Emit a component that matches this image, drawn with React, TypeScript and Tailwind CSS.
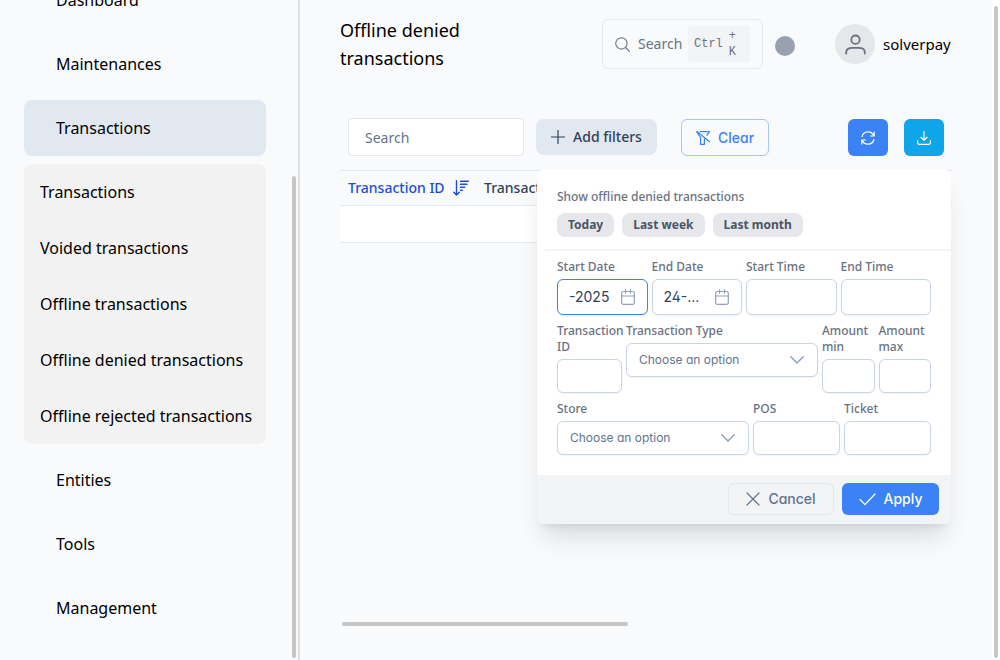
import type { ReactNode, SVGProps } from "react";

const ui = "font-['Noto_Sans',sans-serif]";
const inter = "font-['Inter',sans-serif] [font-feature-settings:'cv02','cv03','cv04','cv11']";
const field = "min-w-0 w-full rounded-md border border-slate-300 bg-white shadow-xs outline-none";

function Icon({ children, ...rest }: SVGProps<SVGSVGElement> & { children: ReactNode }) {
  return (
    <svg
      width="14"
      height="14"
      viewBox="0 0 14 14"
      fill="none"
      stroke="currentColor"
      strokeWidth="1.200"
      strokeLinecap="round"
      strokeLinejoin="round"
      aria-hidden="true"
      {...rest}
    >
      {children}
    </svg>
  );
}

function NavItem({ label, active = false }: { label: string; active?: boolean }) {
  return (
    <a
      href="#"
      className={`flex h-14 items-center rounded-lg px-8 ${active ? "bg-slate-200" : ""}`}
    >
      {label}
    </a>
  );
}

function Sidebar() {
  const children = [
    "Transactions",
    "Voided transactions",
    "Offline transactions",
    "Offline denied transactions",
    "Offline rejected transactions",
  ];
  return (
    <aside className="relative h-full w-[300px] shrink-0 overflow-hidden border-r-2 border-[#dedede]">
      <nav className="-mt-7 flex flex-col gap-2 pl-6 pr-8 text-base">
        <NavItem label="Dashboard" />
        <NavItem label="Maintenances" />
        <NavItem label="Transactions" active />
        <div className="rounded-lg bg-[#f2f2f2]">
          {children.map((label) => (
            <a key={label} href="#" className="flex h-14 items-center whitespace-nowrap px-4">
              {label}
            </a>
          ))}
        </div>
        <NavItem label="Entities" />
        <NavItem label="Tools" />
        <NavItem label="Management" />
      </nav>
      <div className="absolute bottom-0.5 right-0.5 top-44 w-1 rounded-full bg-[#c6c6c6]" />
    </aside>
  );
}

function Header() {
  return (
    <header className="flex items-center">
      <h1 className="w-40 text-lg leading-7">Offline denied transactions</h1>
      <button
        type="button"
        className="ml-auto flex h-[50px] w-[161px] items-center rounded-md border border-gray-200 pl-3 text-gray-500"
      >
        <Icon width="15" height="15" strokeWidth="1">
          <circle cx="6" cy="6" r="5.300" />
          <path d="M9.8 9.8 13.4 13.4" />
        </Icon>
        <span className="ml-2 w-[50px] text-left text-sm">Search</span>
        <kbd className="flex h-9 w-[62px] items-center gap-1.5 rounded bg-gray-100 pl-1.5 font-['Liberation_Mono',monospace] text-xs leading-4">
          <span>Ctrl</span>
          <span>
            +<br />K
          </span>
        </kbd>
      </button>
      <span className="ml-3 mt-1 size-5 rounded-full bg-gray-400" />
      <div className="ml-10 flex items-center gap-2">
        <span className="flex size-10 items-center justify-center rounded-full bg-gray-200 text-gray-500">
          <Icon width="21" height="21">
            <circle cx="7" cy="3.800" r="2.800" />
            <path d="M.8 13v-.8C.8 10 2.500 9.200 5 9.200h4c2.500 0 4.200.8 4.200 3v.8" />
          </Icon>
        </span>
        <span className="w-[69px] whitespace-nowrap text-[15px]">solverpay</span>
      </div>
    </header>
  );
}

function CalendarIcon() {
  return (
    <Icon width="14" height="16" viewBox="0 0 14 16" className="shrink-0 text-slate-400">
      <rect x=".7" y="2.500" width="12.600" height="12.800" rx="1.500" />
      <path d="M.7 7h12.600M4.500 .8v3.400M9.500 .8v3.400" />
    </Icon>
  );
}

function TextField({ id, label, className = "" }: { id: string; label: string; className?: string }) {
  return (
    <div className="flex min-w-0 flex-col gap-1">
      <label htmlFor={id}>{label}</label>
      <input id={id} type="text" className={`${field} ${className}`} />
    </div>
  );
}

function DateField({
  id,
  label,
  value,
  active = false,
}: {
  id: string;
  label: string;
  value: string;
  active?: boolean;
}) {
  return (
    <div className="flex min-w-0 flex-col gap-1">
      <label htmlFor={id}>{label}</label>
      <div
        className={`flex h-9 items-center rounded-md border bg-white pl-[11px] pr-3 shadow-xs ${
          active ? "border-[#3b82f6]" : "border-slate-300"
        }`}
      >
        <input
          id={id}
          type="text"
          defaultValue={value}
          className={`${inter} w-full min-w-0 text-sm font-normal text-slate-700 outline-none`}
        />
        <CalendarIcon />
      </div>
    </div>
  );
}

function SelectField({ id, label }: { id: string; label: string }) {
  return (
    <div className="flex min-w-0 flex-col gap-1">
      <label htmlFor={id}>{label}</label>
      <div className="grid items-center">
        <select
          id={id}
          className={`${inter} ${field} col-start-1 row-start-1 h-[34px] appearance-none px-3 text-xs font-normal text-slate-500`}
        >
          <option>Choose an option</option>
        </select>
        <Icon
          strokeWidth="1.500"
          className="pointer-events-none col-start-1 row-start-1 mr-3.5 justify-self-end text-slate-400"
        >
          <path d="M.8 3.800 7 10l6.200-6.200" />
        </Icon>
      </div>
    </div>
  );
}

function FilterPanel() {
  return (
    <div className="absolute left-px top-[50px] z-10 w-[414px] overflow-hidden rounded-lg bg-white text-xs font-medium leading-4 text-gray-500 shadow-xl">
      <section className="px-5 pt-5">
        <p>Show offline denied transactions</p>
        <div className="mt-2 flex gap-2">
          {["Today", "Last week", "Last month"].map((label) => (
            <button
              key={label}
              type="button"
              className="h-6 rounded-lg bg-gray-200 px-[11px] font-bold text-gray-600"
            >
              {label}
            </button>
          ))}
        </div>
      </section>
      <div className="ml-2 mt-3 h-0.5 bg-gray-100" />
      <form className="flex flex-col gap-2 px-5 pb-5 pt-2">
        <div className="grid grid-cols-4 gap-1">
          <DateField id="start-date" label="Start Date" value="-2025" active />
          <DateField id="end-date" label="End Date" value="24-..." />
          <TextField id="start-time" label="Start Time" className="h-9" />
          <TextField id="end-time" label="End Time" className="h-9" />
        </div>
        <div className="grid grid-cols-[65px_192px_1fr_1fr] items-start gap-1">
          <TextField id="transaction-id" label="Transaction ID" className="h-[34px]" />
          <SelectField id="transaction-type" label="Transaction Type" />
          <TextField id="amount-min" label="Amount min" className="h-[34px]" />
          <TextField id="amount-max" label="Amount max" className="h-[34px]" />
        </div>
        <div className="grid grid-cols-[192px_1fr_1fr] gap-1">
          <SelectField id="store" label="Store" />
          <TextField id="pos" label="POS" className="h-[34px]" />
          <TextField id="ticket" label="Ticket" className="h-[34px]" />
        </div>
      </form>
      <footer className={`${inter} flex justify-end gap-2 bg-gray-100 px-3 pb-[9px] pt-2 text-sm`}>
        <button
          type="button"
          className="flex h-8 w-[106px] items-center justify-center gap-2 rounded-md border border-slate-200 text-slate-500"
        >
          <Icon>
            <path d="m1 1 12 12M13 1 1 13" />
          </Icon>
          Cancel
        </button>
        <button
          type="button"
          className="flex h-8 w-[97px] items-center justify-center gap-2 rounded-md bg-[#3b82f6] text-white"
        >
          <Icon width="17" height="14" viewBox="0 0 17 14">
            <path d="m1 7.500 5 5L16 2" />
          </Icon>
          Apply
        </button>
      </footer>
    </div>
  );
}

function Toolbar() {
  return (
    <div className="flex items-end px-2">
      <input
        type="search"
        aria-label="Search transactions"
        placeholder="Search"
        className="h-[38px] w-44 rounded border border-gray-200 bg-white px-4 text-sm outline-none placeholder:text-slate-500"
      />
      <div className="relative ml-3 self-center">
        <button
          type="button"
          className="flex h-9 w-[121px] items-center justify-center gap-2 rounded-lg bg-slate-200 text-sm font-medium text-slate-700"
        >
          <Icon>
            <path d="M7 .5v13M.5 7h13" />
          </Icon>
          Add filters
        </button>
        <FilterPanel />
      </div>
      <button
        type="button"
        className={`${inter} ml-6 flex h-[37px] w-[88px] items-center justify-center gap-2 rounded-md border border-[#a3c5fb] text-sm font-medium text-[#3b82f6]`}
      >
        <Icon>
          <path d="M4.300 .7h9.100L11 4.300M.6 .7l4 5.600v7h3.800V7.800M1.300 .7l12 9.800" />
        </Icon>
        Clear
      </button>
      <button
        type="button"
        aria-label="Refresh"
        className="ml-auto flex h-[37px] w-10 items-center justify-center rounded-md bg-[#3b82f6] text-white"
      >
        <Icon>
          <path d="M1 5.500a6.200 6.200 0 0 1 11.800-.7M13.200 1v4H9.500M13 8.500a6.200 6.200 0 0 1-11.800.7M.8 13V9h3.700" />
        </Icon>
      </button>
      <button
        type="button"
        aria-label="Download"
        className="ml-4 flex h-[37px] w-10 items-center justify-center rounded-md bg-[#0ea5e9] text-white"
      >
        <Icon>
          <path d="M7 .6v8.700M3.900 6.300 7 9.300l3.100-3M.6 9.500v2.200c0 1 .6 1.700 1.700 1.700h9.400c1.100 0 1.700-.7 1.700-1.700V9.500" />
        </Icon>
      </button>
    </div>
  );
}

function SortIcon() {
  return (
    <Icon width="16" height="16" viewBox="0 0 16 16" strokeWidth="1.400">
      <path d="M3.500 .8v14M.8 12.200l2.700 2.800 2.700-2.800M7.500 1.200h8M7.500 4.200H14M7.500 7.200h4.300M7.500 10.200h1.700" />
    </Icon>
  );
}

export default function App() {
  return (
    <div className={`${ui} flex h-screen overflow-hidden bg-slate-50 text-black`}>
      <Sidebar />
      <main className="relative flex min-w-0 flex-1 flex-col pl-10 pr-12 pt-4">
        <Header />
        <div className="mt-[46px]">
          <Toolbar />
        </div>
        <div className="mt-3.5 overflow-hidden">
          <table className="w-full border-collapse whitespace-nowrap text-sm">
            <thead>
              <tr className="h-[35px] border-y border-slate-200 text-left">
                <th className="w-[136px] pl-2 font-medium text-[#1d4ed8]">
                  <span className="flex items-center gap-2">
                    Transaction ID
                    <SortIcon />
                  </span>
                </th>
                <th className="pl-2 font-medium text-slate-700">Transaction Type</th>
              </tr>
            </thead>
            <tbody>
              <tr className="h-[37px] border-b border-slate-200 bg-white">
                <td colSpan={2} />
              </tr>
            </tbody>
          </table>
        </div>
        <div className="mb-[34px] ml-0.5 mt-auto h-1 w-[286px] shrink-0 rounded-full bg-[#c6c6c6]" />
        <div className="absolute inset-y-0 right-0 w-2 bg-white">
          <div className="absolute bottom-0.5 right-0.5 top-1.5 w-1 rounded-full bg-[#c6c6c6]" />
        </div>
      </main>
    </div>
  );
}
